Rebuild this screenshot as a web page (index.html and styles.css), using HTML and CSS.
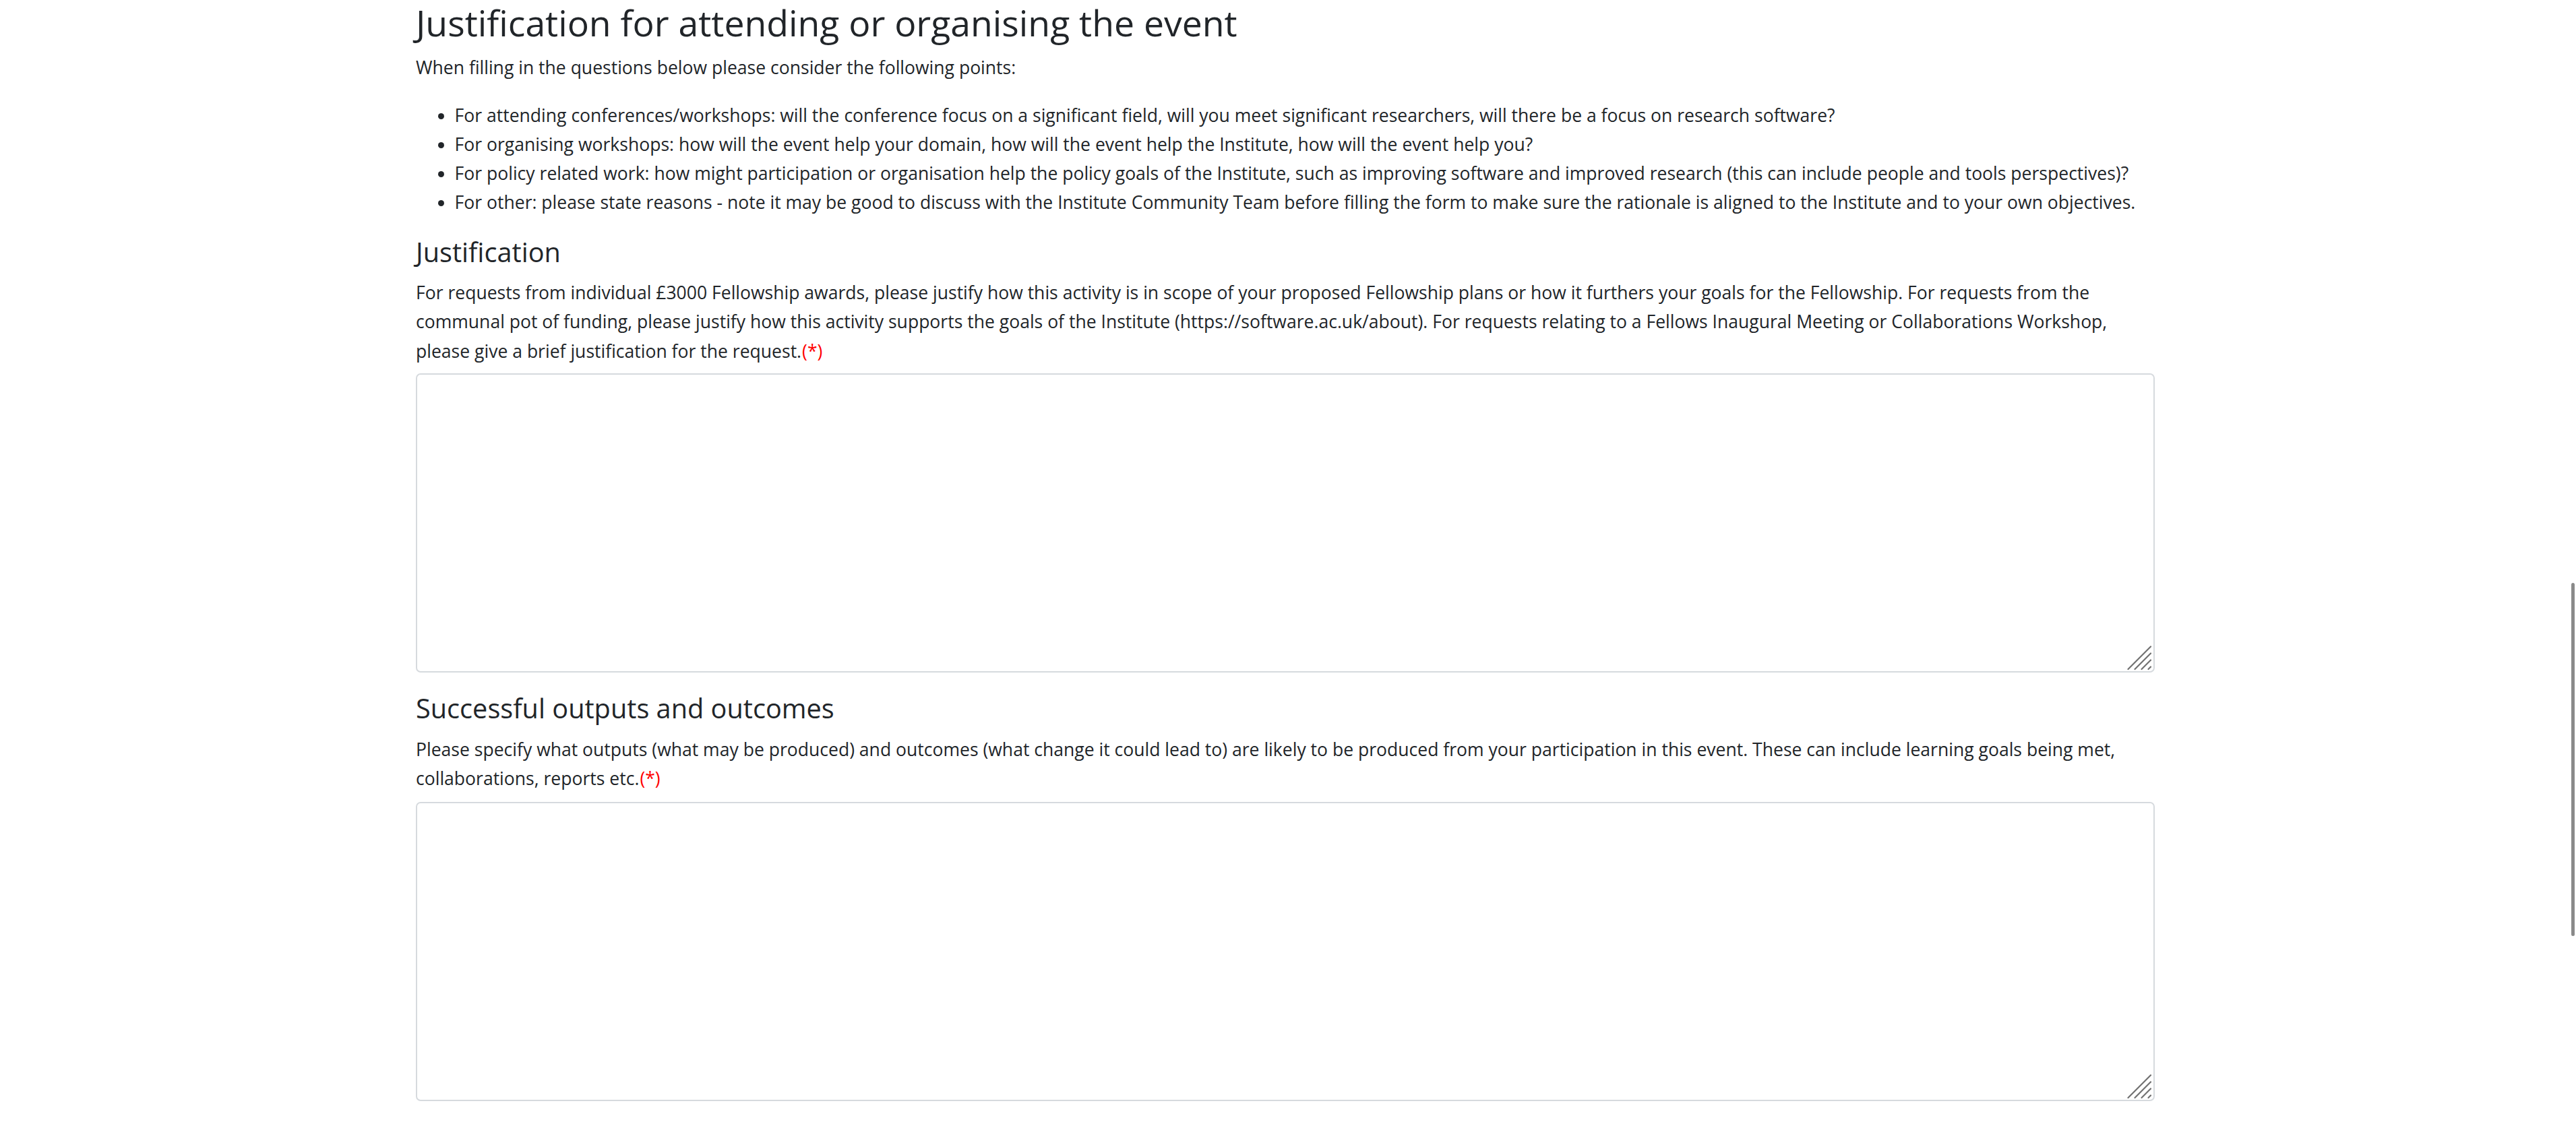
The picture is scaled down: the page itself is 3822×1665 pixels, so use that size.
FILE: index.html
```html
<!DOCTYPE html>
<html lang="en">
<head>
<meta charset="utf-8">
<title>Justification for attending or organising the event</title>
<link rel="stylesheet" href="styles.css">
</head>
<body>
<main class="page">
  <section class="intro">
    <h2 class="title">Justification for attending or organising the event</h2>
    <p class="lead">When filling in the questions below please consider the following points:</p>
    <ul class="points">
      <li>For attending conferences/workshops: will the conference focus on a significant field, will you meet significant researchers, will there be a focus on research software?</li>
      <li>For organising workshops: how will the event help your domain, how will the event help the Institute, how will the event help you?</li>
      <li>For policy related work: how might participation or organisation help the policy goals of the Institute, such as improving software and improved research (this can include people and tools perspectives)?</li>
      <li>For other: please state reasons - note it may be good to discuss with the Institute Community Team before filling the form to make sure the rationale is aligned to the Institute and to your own objectives.</li>
    </ul>
  </section>

  <section class="question">
    <h4 class="q-title">Justification</h4>
    <label class="q-label" for="justification">For requests from individual £3000 Fellowship awards, please justify how this activity is in scope of your proposed Fellowship plans or how it furthers your goals for the Fellowship. For requests from the communal pot of funding, please justify how this activity supports the goals of the Institute (https://software.ac.uk/about). For requests relating to a Fellows Inaugural Meeting or Collaborations Workshop, please give a brief justification for the request.<span class="req">(*)</span></label>
    <div class="field">
      <textarea id="justification" class="text-input"></textarea>
      <svg class="grip" width="40" height="40" viewBox="0 0 40 40" aria-hidden="true">
        <g stroke="#6f6f6f" stroke-width="2.2" stroke-linecap="round" fill="none">
          <line x1="1.5" y1="36" x2="35" y2="2.5"/>
          <line x1="11.5" y1="36" x2="35" y2="12.5"/>
          <line x1="21.5" y1="36" x2="35" y2="22.5"/>
          <line x1="31.5" y1="36" x2="35" y2="32.5"/>
        </g>
      </svg>
    </div>
  </section>

  <section class="question">
    <h4 class="q-title">Successful outputs and outcomes</h4>
    <label class="q-label" for="outcomes">Please specify what outputs (what may be produced) and outcomes (what change it could lead to) are likely to be produced from your participation in this event. These can include learning goals being met, collaborations, reports etc.<span class="req">(*)</span></label>
    <div class="field">
      <textarea id="outcomes" class="text-input"></textarea>
      <svg class="grip" width="40" height="40" viewBox="0 0 40 40" aria-hidden="true">
        <g stroke="#6f6f6f" stroke-width="2.2" stroke-linecap="round" fill="none">
          <line x1="1.5" y1="36" x2="35" y2="2.5"/>
          <line x1="11.5" y1="36" x2="35" y2="12.5"/>
          <line x1="21.5" y1="36" x2="35" y2="22.5"/>
          <line x1="31.5" y1="36" x2="35" y2="32.5"/>
        </g>
      </svg>
    </div>
  </section>
</main>
<div class="scroll-thumb" aria-hidden="true"></div>
</body>
</html>
```
FILE: styles.css
```css
html, body {
  margin: 0;
  padding: 0;
  background: #ffffff;
  overflow: hidden;
}

body {
  font-family: "Open Sans", "Noto Sans", sans-serif;
  font-size: 26.55px;
  line-height: 43.2px;
  color: #212529;
}

.page {
  width: 2580px;
  margin: 0 0 0 617px;
}

.title {
  font-size: 53.5px;
  line-height: 69.12px;
  font-weight: 400;
  margin: -1.3px 0 0 0;
  height: 69.12px;
}

.lead {
  margin: 11.3px 0 0 0;
}

.points {
  margin: 27.5px 0 0 0;
  padding-left: 57.6px;
}

.question {
  display: flex;
  flex-direction: column;
  margin-top: 26.1px;
}

.question + .question {
  margin-top: 28.7px;
}

.q-title {
  font-size: 39.7px;
  line-height: 51.84px;
  font-weight: 400;
  margin: 0;
}

.q-label {
  display: block;
  margin-top: 12.6px;
}

.req {
  color: #ff0000;
  margin-left: 1px;
}

.field {
  position: relative;
  margin-top: 11px;
  height: 444px;
}

.question + .question .field {
  margin-top: 12.5px;
}

.text-input {
  display: block;
  box-sizing: border-box;
  width: 100%;
  height: 100%;
  margin: 0;
  padding: 10px 20px;
  border: 2px solid #d6dade;
  border-radius: 7px;
  background: #ffffff;
  resize: none;
  font-family: "Open Sans", sans-serif;
  font-size: 26.55px;
  color: #212529;
  outline: none;
}

.grip {
  position: absolute;
  right: 1px;
  bottom: 1px;
}

.scroll-thumb {
  position: fixed;
  top: 865px;
  right: 2px;
  width: 5px;
  height: 524px;
  border-radius: 3px;
  background: #8a8a8a;
}
```
